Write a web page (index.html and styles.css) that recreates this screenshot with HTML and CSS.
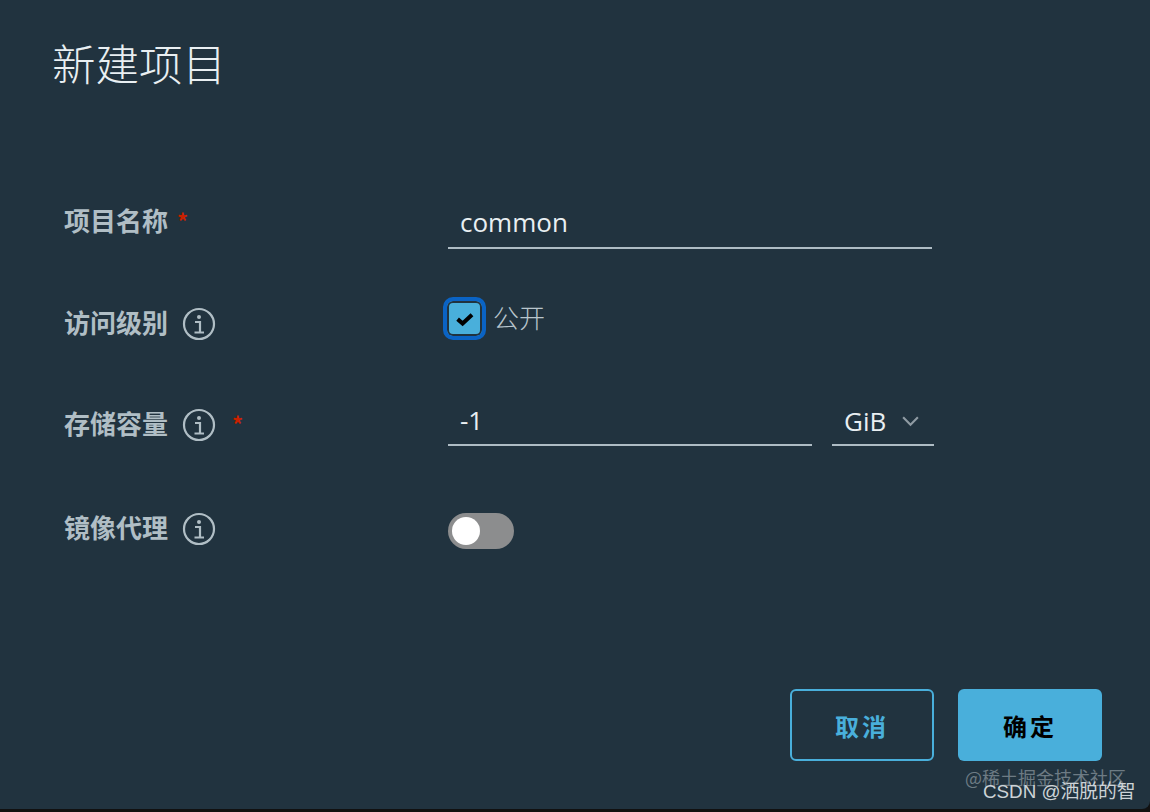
FILE: index.html
```html
<!DOCTYPE html>
<html lang="zh-CN">
<head>
<meta charset="utf-8">
<title>新建项目</title>
<link rel="stylesheet" href="styles.css">
</head>
<body>
<main class="modal">
  <h1 class="title">新建项目</h1>
  <form class="form">
    <div class="row row-name">
      <div class="label"><span>项目名称</span><span class="req">*</span></div>
      <div class="field field-line wide">common</div>
    </div>
    <div class="row row-access">
      <div class="label"><span>访问级别</span>
        <svg class="info" viewBox="0 0 34 34"><circle cx="17" cy="17" r="15" fill="none" stroke="currentColor" stroke-width="2.2"/><circle cx="17" cy="10" r="2" fill="currentColor"/><path d="M13 15h5v10M12.500 25.500h9.500" fill="none" stroke="currentColor" stroke-width="2.200"/></svg>
      </div>
      <div class="check-wrap">
        <span class="check"><svg viewBox="0 0 20 20"><path d="M4.500 10.500l4 3.500 7.500-7" fill="none" stroke="#000" stroke-width="3.200"/></svg></span>
        <span class="check-text">公开</span>
      </div>
    </div>
    <div class="row row-quota">
      <div class="label"><span>存储容量</span>
        <svg class="info" viewBox="0 0 34 34"><circle cx="17" cy="17" r="15" fill="none" stroke="currentColor" stroke-width="2.2"/><circle cx="17" cy="10" r="2" fill="currentColor"/><path d="M13 15h5v10M12.500 25.500h9.500" fill="none" stroke="currentColor" stroke-width="2.200"/></svg>
        <span class="req req-info">*</span>
      </div>
      <div class="field field-line quota">-1</div>
      <div class="field-line unit"><span>GiB</span><svg class="chev" viewBox="0 0 18 12"><path d="M2 2l7 7 7-7" fill="none" stroke="#8f9ba3" stroke-width="2"/></svg></div>
    </div>
    <div class="row row-proxy">
      <div class="label"><span>镜像代理</span>
        <svg class="info" viewBox="0 0 34 34"><circle cx="17" cy="17" r="15" fill="none" stroke="currentColor" stroke-width="2.2"/><circle cx="17" cy="10" r="2" fill="currentColor"/><path d="M13 15h5v10M12.500 25.500h9.500" fill="none" stroke="currentColor" stroke-width="2.200"/></svg>
      </div>
      <div class="toggle"><span class="knob"></span></div>
    </div>
  </form>
  <div class="actions">
    <button type="button" class="btn btn-outline">取消</button>
    <button type="button" class="btn btn-solid">确定</button>
  </div>
  <div class="marks">
    <span class="mark-a">@稀土掘金技术社区</span>
    <span class="mark-b">CSDN @洒脱的智</span>
  </div>
</main>
</body>
</html>
```
FILE: styles.css
```css
* { box-sizing: border-box; }
html, body { margin: 0; height: 100%; background: #111; overflow: hidden; }
body { font-family: "Noto Sans CJK SC", "Noto Sans", sans-serif; }
.modal {
  position: relative;
  width: 1150px;
  height: 809px;
  background: #21333f;
  border-bottom-right-radius: 8px;
  padding: 33px 48px 0 52px;
}
.title {
  margin: 0;
  height: 60px;
  font-size: 43.5px;
  line-height: 60px;
  font-weight: 300;
  color: #e9eff2;
}
.form { margin-top: 112px; padding-left: 12px; }
.row { display: flex; align-items: flex-start; }
.row-name { height: 99px; }
.row-access { height: 101px; }
.row-quota { height: 104px; }
.row-proxy { height: 60px; }
.label {
  width: 384px;
  display: flex;
  align-items: center;
  gap: 14px;
  height: 36px;
  font-size: 26px;
  font-weight: 700;
  line-height: 36px;
  color: #b0bec5;
}
.row-name .label { gap: 9px; height: 30px; line-height: 30px; }
.req { color: #c92100; font-size: 22px; font-weight: 700; line-height: 1; }
.req-info { margin-left: 2px; }
.info { width: 34px; height: 34px; flex: none; margin-top: 3px; }
.field-line {
  border-bottom: 2px solid #aebcc4;
  color: #e9eff2;
  font-family: "Open Sans", sans-serif;
  font-size: 26px;
}
.field { padding-left: 12px; line-height: 38px; }
.wide { width: 484px; height: 46px; margin-top: -2px; }
.quota { width: 364px; height: 45px; margin-top: -4px; }
.unit {
  width: 102px;
  margin-left: 20px;
  margin-top: -5px;
  height: 46px;
  line-height: 38px;
  display: flex;
  align-items: center;
  padding: 0 0 2px 12px;
  gap: 15px;
}
.chev { width: 19px; height: 13px; }
.check-wrap { display: flex; align-items: center; gap: 7px; margin-top: -7px; margin-left: -5px; }
.check {
  width: 43px;
  height: 43px;
  border: 4px solid #0a63c4;
  border-radius: 10px;
  background: #49afdb;
  box-shadow: inset 0 0 0 2px #21333f;
  display: flex;
  align-items: center;
  justify-content: center;
}
.check svg { width: 25px; height: 25px; }
.check-text { font-size: 26px; font-weight: 300; color: #b8c5cc; margin-top: -4px; }
.toggle {
  width: 66px;
  height: 36px;
  margin-top: 4px;
  border-radius: 18px;
  background: #8c8d8e;
  padding: 3px 4px;
}
.knob { display: block; width: 28px; height: 28px; margin-top: 1px; border-radius: 50%; background: #fff; }
.actions {
  position: absolute;
  right: 48px;
  top: 689px;
  display: flex;
  gap: 24px;
}
.btn {
  width: 144px;
  height: 72px;
  border-radius: 6px;
  font-family: "Noto Sans CJK SC", sans-serif;
  font-size: 24px;
  font-weight: 700;
  letter-spacing: 3px;
  cursor: pointer;
}
.btn-outline { background: transparent; border: 2px solid #49afdb; color: #49afdb; }
.btn-solid { background: #49afdb; border: 0; color: #000; }
.marks { position: absolute; left: 0; top: 0; }
.mark-a { position: absolute; left: 965px; top: 764px; white-space: nowrap; font-size: 18px; line-height: 26px; color: #6d7b84; }
.mark-b { position: absolute; left: 983px; top: 778px; white-space: nowrap; font-size: 18.8px; line-height: 28px; color: #cdd3d7; font-family: "Liberation Sans", "Noto Sans CJK SC", sans-serif; }
```
